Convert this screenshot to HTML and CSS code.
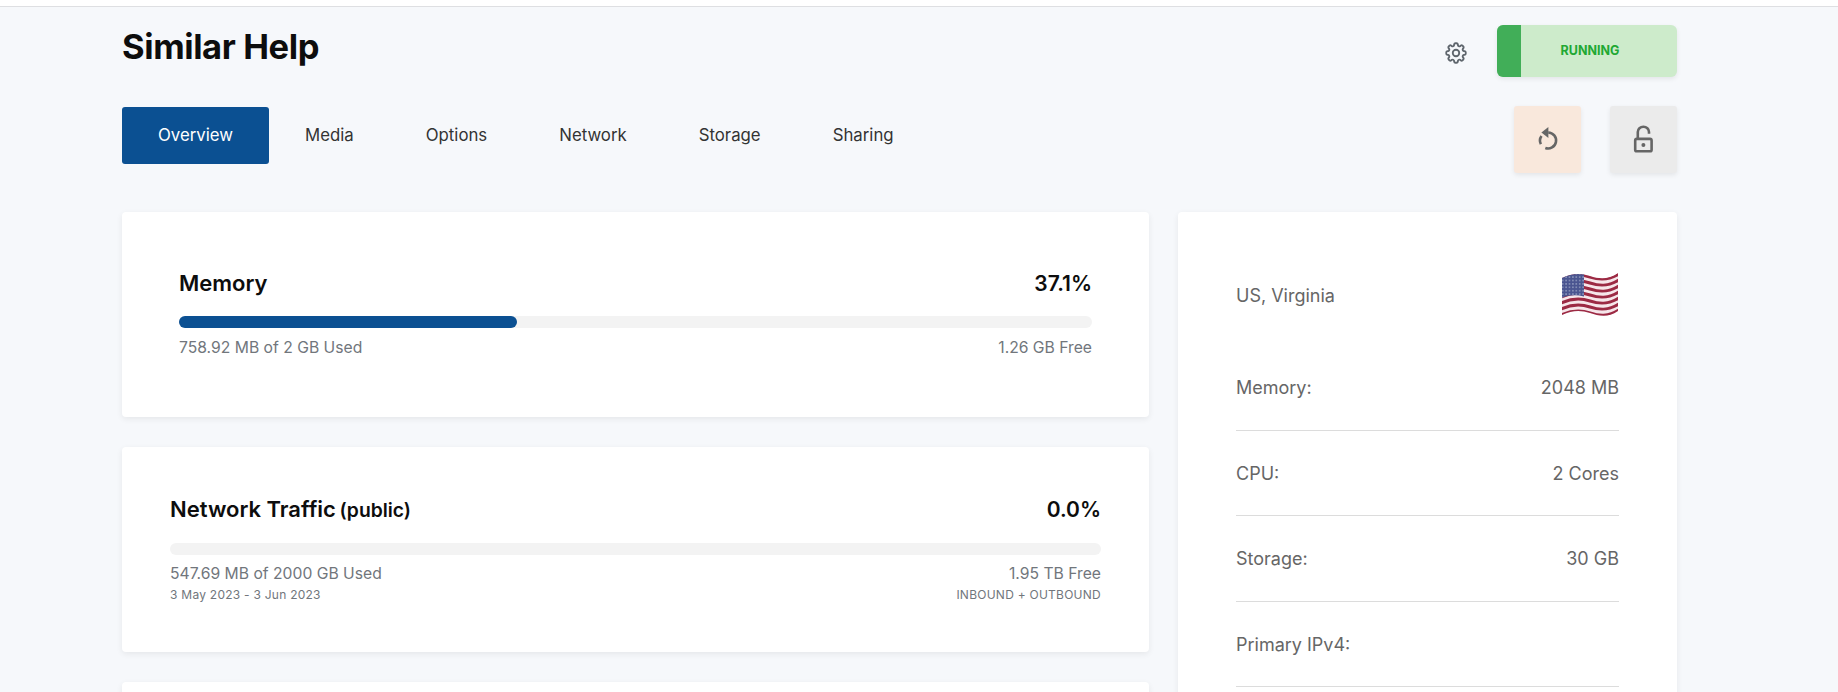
FILE: index.html
```html
<!doctype html>
<html>
<head>
  <title>Similar Help</title>
  <link rel="stylesheet" href="styles.css">
</head>
<body>
  <div class="page">
    <header class="top">
      <h1>Similar Help</h1>
      <div class="top-right">
        <svg class="gear" viewBox="0 0 24 24" fill="none" stroke="currentColor" stroke-width="1.7" stroke-linecap="round" stroke-linejoin="round">
          <path d="M10.343 3.94c.09-.542.56-.94 1.11-.94h1.093c.55 0 1.02.398 1.11.94l.149.894c.07.424.384.764.78.93.398.164.855.142 1.205-.108l.737-.527a1.125 1.125 0 011.45.12l.773.774c.39.389.44 1.002.12 1.45l-.527.737c-.25.35-.272.806-.107 1.204.165.397.505.71.93.78l.893.15c.543.09.94.56.94 1.109v1.094c0 .55-.397 1.02-.94 1.11l-.893.149c-.425.07-.765.383-.93.78-.165.398-.143.854.107 1.204l.527.738c.32.447.269 1.06-.12 1.45l-.774.773a1.125 1.125 0 01-1.449.12l-.738-.527c-.35-.25-.806-.272-1.203-.107-.397.165-.71.505-.781.929l-.149.894c-.09.542-.56.94-1.11.94h-1.094c-.55 0-1.019-.398-1.11-.94l-.148-.894c-.071-.424-.384-.764-.781-.93-.398-.164-.854-.142-1.204.108l-.738.527c-.447.32-1.06.269-1.45-.12l-.773-.774a1.125 1.125 0 01-.12-1.45l.527-.737c.25-.35.273-.806.108-1.204-.165-.397-.505-.71-.93-.78l-.894-.15c-.542-.09-.94-.56-.94-1.109v-1.094c0-.55.398-1.02.94-1.11l.894-.149c.424-.07.765-.383.93-.78.165-.398.143-.854-.107-1.204l-.527-.738a1.125 1.125 0 01.12-1.45l.773-.773a1.125 1.125 0 011.45-.12l.737.527c.35.25.807.272 1.204.107.397-.165.71-.505.78-.929l.15-.894z"/>
          <circle cx="12" cy="12" r="3"/>
        </svg>
        <div class="status">
          <span class="status-mark"></span>
          <span class="status-text">RUNNING</span>
        </div>
      </div>
    </header>

    <div class="toolbar">
      <nav class="tabs">
        <a class="tab active">Overview</a>
        <a class="tab">Media</a>
        <a class="tab">Options</a>
        <a class="tab">Network</a>
        <a class="tab">Storage</a>
        <a class="tab">Sharing</a>
      </nav>
      <div class="actions">
        <button class="action restart">
          <svg viewBox="-0.5 1.5 36 36" fill="none" stroke="#666" stroke-width="2.6">
            <path d="M17.7 12A8 8 0 1 1 14.8 27.5"/>
            <path d="M10.4 23.7A8 8 0 0 1 11 15.4"/>
            <path d="M17.9 6.4V17.6L10.9 12Z" fill="#666" stroke="none"/>
          </svg>
        </button>
        <button class="action lock">
          <svg viewBox="0 1.5 36 36" fill="none" stroke="#666" stroke-width="2.6">
            <rect x="9.2" y="18.4" width="16.4" height="12.4" rx="1.6"/>
            <path d="M11.8 18V11.4a5.6 5.2 0 0 1 11.2 0v1.8"/>
            <circle cx="17.4" cy="24.6" r="2" fill="#666" stroke="none"/>
          </svg>
        </button>
      </div>
    </div>

    <div class="columns">
      <main class="main">
        <section class="card usage">
          <div class="usage-head">
            <h2>Memory</h2>
            <span class="pct">37.1%</span>
          </div>
          <div class="bar"><div class="bar-fill" style="width: 37%"></div></div>
          <div class="usage-foot">
            <span>758.92 MB of 2 GB Used</span>
            <span>1.26 GB Free</span>
          </div>
        </section>

        <section class="card usage traffic">
          <div class="usage-head">
            <h2>Network Traffic <small>(public)</small></h2>
            <span class="pct">0.0%</span>
          </div>
          <div class="bar"></div>
          <div class="usage-foot">
            <span>547.69 MB of 2000 GB Used</span>
            <span>1.95 TB Free</span>
          </div>
          <div class="usage-note">
            <span>3 May 2023 - 3 Jun 2023</span>
            <span>INBOUND + OUTBOUND</span>
          </div>
        </section>

        <section class="card usage"></section>
      </main>

      <aside class="card side">
        <div class="location">
          <span>US, Virginia</span>
          <svg class="flag" viewBox="0 0 58 46">
            <defs>
              <clipPath id="flag-shape">
                <path d="M1 6C11 1 20 1 29 4S47 8 57 1V39C47 46 38 44 29 41S11 38 1 43Z"/>
              </clipPath>
              <pattern id="flag-stars" width="3.4" height="3.4" patternUnits="userSpaceOnUse">
                <circle cx="1.7" cy="1.7" r="0.7" fill="#c9cee2"/>
              </pattern>
            </defs>
            <g clip-path="url(#flag-shape)">
              <rect width="58" height="46" fill="#f6e6ea"/>
              <g fill="none" stroke="#9c2a44" stroke-width="3">
                <path d="M0 7C11 2 20 2 29 5S47 9 58 2"/>
                <path d="M0 13C11 8 20 8 29 11S47 15 58 8"/>
                <path d="M0 19C11 14 20 14 29 17S47 21 58 14"/>
                <path d="M0 25C11 20 20 20 29 23S47 27 58 20"/>
                <path d="M0 31C11 26 20 26 29 29S47 33 58 26"/>
                <path d="M0 37C11 32 20 32 29 35S47 39 58 32"/>
                <path d="M0 43C11 38 20 38 29 41S47 45 58 38"/>
              </g>
              <path d="M0 0H23V24.5C15 22.5 8 23 0 26Z" fill="#4a5590"/>
              <path d="M0 0H23V24.5C15 22.5 8 23 0 26Z" fill="url(#flag-stars)"/>
            </g>
          </svg>
        </div>
        <div class="spec"><span>Memory:</span><span>2048 MB</span></div>
        <div class="spec"><span>CPU:</span><span>2 Cores</span></div>
        <div class="spec"><span>Storage:</span><span>30 GB</span></div>
        <div class="spec"><span>Primary IPv4:</span><span></span></div>
      </aside>
    </div>
  </div>
</body>
</html>
```

FILE: styles.css
```css
html, body {
  margin: 0;
  height: 692px;
  overflow: hidden;
}

body {
  background: #f6f8fb;
  font-family: Inter, "Liberation Sans", sans-serif;
  color: #0d0d0d;
}

body::before {
  content: "";
  position: fixed;
  top: 0;
  left: 0;
  right: 0;
  height: 6px;
  background: #fff;
}

.page {
  border-top: 1px solid #dedfe2;
  margin-top: 6px;
  padding: 0 161px 0 122px;
}

.top {
  display: flex;
  justify-content: space-between;
  height: 100px;
}

h1 {
  margin: 17px 0 0;
  font-size: 34.5px;
  line-height: 46px;
  font-weight: 700;
  letter-spacing: -0.4px;
}

.top-right {
  display: flex;
  align-items: flex-start;
}

.gear {
  width: 26px;
  height: 26px;
  margin: 33px 28px 0 0;
  color: #5f666d;
}

.status {
  display: flex;
  width: 180px;
  height: 52px;
  margin-top: 18px;
  border-radius: 6px;
  overflow: hidden;
  background: #cdebcb;
  box-shadow: 0 2px 5px rgba(0, 0, 0, 0.08);
}

.status-mark {
  width: 24px;
  background: #41ae58;
}

.status-text {
  flex: 1;
  padding: 0 18px 2px 0;
  display: flex;
  align-items: center;
  justify-content: center;
  font-size: 12.5px;
  font-weight: 700;
  color: #21a833;
}

.toolbar {
  display: flex;
  justify-content: space-between;
  align-items: flex-start;
  height: 105px;
}

.tabs {
  display: flex;
}

.tab {
  padding: 0 36px 1px;
  height: 56px;
  display: flex;
  align-items: center;
  font-size: 16.8px;
  color: #333;
  border-radius: 3px;
}

.tab.active {
  background: #0b5092;
  color: #fff;
}

.actions {
  display: flex;
  gap: 29px;
  margin-top: -1px;
}

.action {
  width: 67px;
  height: 67px;
  padding: 0;
  border: 0;
  border-radius: 3px;
  display: flex;
  align-items: center;
  justify-content: center;
  box-shadow: 0 2px 5px rgba(0, 0, 0, 0.08);
}

.action svg {
  width: 36px;
  height: 36px;
}

.restart { background: #f9e8dc; }
.lock { background: #ebebeb; }

.columns {
  display: grid;
  grid-template-columns: 1027px 499px;
  gap: 29px;
  align-items: start;
}

.main {
  display: flex;
  flex-direction: column;
  gap: 30px;
}

.card {
  background: #fff;
  border-radius: 4px;
  box-shadow: 0 2px 6px rgba(0, 0, 0, 0.07);
}

.usage {
  height: 205px;
  box-sizing: border-box;
  padding: 55px 57px 0 57px;
}

.usage.traffic {
  padding: 46px 48px 0 48px;
}

.usage-head {
  display: flex;
  justify-content: space-between;
  align-items: center;
  height: 32px;
  margin-bottom: 17px;
}

.traffic .usage-head {
  margin-bottom: 17.5px;
}

h2 {
  margin: 0;
  font-size: 22px;
  font-weight: 600;
}

h2 small {
  font-size: 19.3px;
  margin-left: -2px;
}

.pct {
  font-size: 21px;
  font-weight: 600;
}

.bar {
  height: 12px;
  border-radius: 6px;
  background: #f3f3f3;
}

.bar-fill {
  height: 100%;
  border-radius: 6px;
  background: #0b5092;
}

.usage-foot, .usage-note {
  display: flex;
  justify-content: space-between;
  color: #71767c;
}

.usage-foot {
  margin-top: 8px;
  font-size: 15.7px;
  line-height: 24px;
}

.traffic .usage-foot {
  margin-top: 7px;
}

.usage-note {
  margin-top: 0.5px;
  font-size: 12px;
  line-height: 18px;
  letter-spacing: 0.25px;
}

.side {
  padding: 60px 58px 0;
  height: 700px;
  color: #666;
  font-size: 18px;
}

.location {
  display: flex;
  justify-content: space-between;
  align-items: center;
  height: 46px;
  margin-bottom: 27px;
}

.flag {
  width: 58px;
  height: 46px;
}

.spec {
  display: flex;
  justify-content: space-between;
  height: 85.5px;
  box-sizing: border-box;
  padding-top: 31.2px;
  line-height: 24px;
  border-bottom: 1px solid #dcdcdc;
}
```
